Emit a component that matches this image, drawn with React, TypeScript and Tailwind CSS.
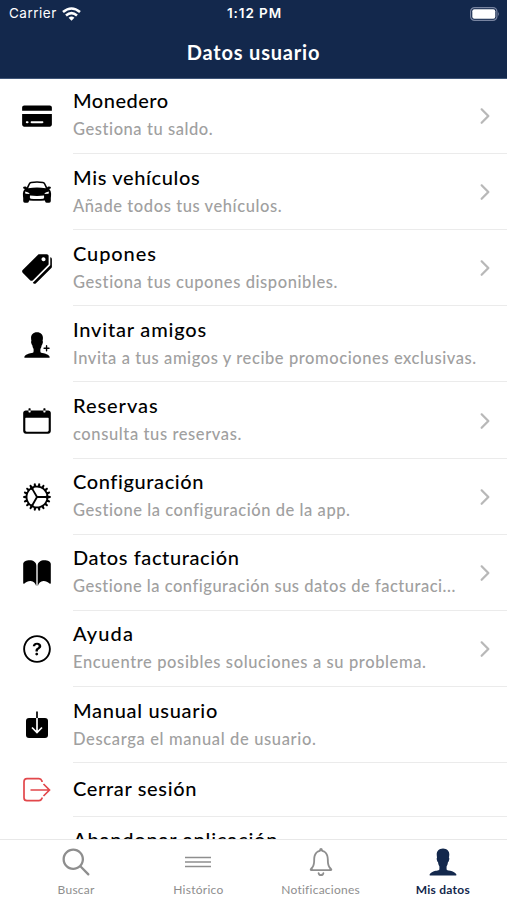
import React from 'react';
import {
  IoIosArrowForward,
  IoIosBook,
  IoIosCalendar,
  IoIosCard,
  IoIosCog,
  IoIosHelpCircleOutline,
  IoIosNotificationsOutline,
  IoIosPerson,
  IoIosPersonAdd,
  IoIosPricetags,
  IoIosSearch,
} from 'react-icons/io';

const CarIcon = () => (
  <svg className="-mt-px" width="30" height="24" viewBox="0 0 30 24">
    <path
      fillRule="evenodd"
      d="M9 1.800q6-1.200 12 0 1.600.3 2.300 1.700L25.300 7.500q.2-.9 1.500-1 2 0 2.200 1.300 0 1-1.800 1.200 1.800 1.600 1.900 4.600 0 3-.3 4.500v3q0 1.700-1.600 1.700h-2.600q-1.500 0-1.700-2.200-8 .5-15.800 0-.2 2.200-1.700 2.200H2.800q-1.600 0-1.600-1.700v-3Q.9 16.600.9 13.600 1 10.600 2.800 9 1 8.800 1 7.800q.2-1.300 2.200-1.300 1.300.1 1.500 1L6.700 3.500Q7.400 2.100 9 1.800zM9.300 3.200Q8.500 3.400 8 4.300L6.200 8.200q8.800-1.300 17.600 0L22 4.300q-.5-.9-1.300-1.100-5.700-1-11.400 0zM3.300 11.500q-.4 1.500.2 2.200l4.300.4q-.8-1.800-4.500-2.600zM26.700 11.500q.4 1.500-.2 2.200l-4.300.4q.8-1.800 4.500-2.600zM8 15.500q-.6 2.300.6 3.200 6.400.7 12.800 0 1.200-.9.6-3.200-7 .8-14 0z"
    />
  </svg>
);

const DownloadIcon = () => (
  <svg className="mt-[3px]" width="36" height="36" viewBox="0 0 36 36" fill="none">
    <path d="M10 9h16q3 0 3 3v14q0 3-3 3H10q-3 0-3-3V12q0-3 3-3z" fill="#000" />
    <path d="M18 8v15.500M13 18.500l5 5 5-5" stroke="#fff" strokeWidth="1.700" />
    <path d="M18 2.500v6.500" stroke="#000" strokeWidth="1.700" />
  </svg>
);

const LogOutIcon = () => (
  <svg width="36" height="36" viewBox="0 0 36 36" fill="none" stroke="#e2474b" strokeWidth="1.700">
    <path d="M23 10V9q-1-2.300-3-2.300H8q-3 0-3 3v16q0 3 3 3h12q2 0 3-2.300v-1" />
    <path d="M11.500 18h19.500M24.500 12l6 6-6 6" />
  </svg>
);

const MenuIcon = () => (
  <svg width="26" height="12" viewBox="0 0 26 12" stroke="#8e8e8e" strokeWidth="1.300">
    <path d="M0 1.500h26M0 6h26M0 10.500h26" />
  </svg>
);

const items = [
  { title: 'Monedero', titleSpacing: 'tracking-[0.5px]', text: 'Gestiona tu saldo.', textSpacing: 'tracking-[0.56px]', icon: <IoIosCard size={34} />, arrow: true },
  { title: 'Mis vehículos', titleSpacing: 'tracking-[0.65px]', text: 'Añade todos tus vehículos.', textSpacing: 'tracking-[0.58px]', icon: <CarIcon />, arrow: true },
  { title: 'Cupones', titleSpacing: 'tracking-[0.9px]', text: 'Gestiona tus cupones disponibles.', textSpacing: 'tracking-[0.58px]', icon: <IoIosPricetags size={34} />, arrow: true },
  { title: 'Invitar amigos', titleSpacing: 'tracking-[0.8px]', text: 'Invita a tus amigos y recibe promociones exclusivas.', textSpacing: 'tracking-[0.58px]', icon: <IoIosPersonAdd size={34} />, arrow: false },
  { title: 'Reservas', titleSpacing: 'tracking-[0.95px]', text: 'consulta tus reservas.', textSpacing: 'tracking-[0.6px]', icon: <IoIosCalendar size={34} />, arrow: true },
  { title: 'Configuración', titleSpacing: 'tracking-[0.6px]', text: 'Gestione la configuración de la app.', textSpacing: 'tracking-[0.55px]', icon: <IoIosCog size={34} />, arrow: true },
  { title: 'Datos facturación', titleSpacing: 'tracking-[0.6px]', text: 'Gestione la configuración sus datos de facturaci...', textSpacing: 'tracking-[0.5px]', icon: <IoIosBook size={34} />, arrow: true },
  { title: 'Ayuda', titleSpacing: 'tracking-[1.1px]', text: 'Encuentre posibles soluciones a su problema.', textSpacing: 'tracking-[0.61px]', icon: <IoIosHelpCircleOutline size={34} />, arrow: true },
  { title: 'Manual usuario', titleSpacing: 'tracking-[0.7px]', text: 'Descarga el manual de usuario.', textSpacing: 'tracking-[0.64px]', icon: <DownloadIcon />, arrow: false },
];

const tabs = [
  { label: 'Buscar', icon: <IoIosSearch size={36} />, active: false },
  { label: 'Histórico', icon: <MenuIcon />, active: false },
  { label: 'Notificaciones', icon: <IoIosNotificationsOutline size={36} />, active: false },
  { label: 'Mis datos', icon: <IoIosPerson size={36} />, active: true },
];

export default function App() {
  return (
    <div className="flex h-[900px] w-[507px] flex-col overflow-hidden bg-white font-['Lato',sans-serif] text-black">
      <header className="z-10 h-[79px] shrink-0 border-b border-[#3f5577] bg-[#13284c] text-white">
        <div className="grid h-[27px] grid-cols-3 items-center pl-[9px] pr-[7px] font-['Inter',sans-serif] text-[13.5px]">
          <div className="flex items-center gap-[5px] tracking-[0.5px]">
            <span>Carrier</span>
            <svg width="19" height="14" viewBox="0 0 19 14" fill="none" stroke="#fff" strokeWidth="2.6">
              <path d="M1 5q8.500-7 17 0M4 8.500q5.500-4.600 11 0" />
              <path d="M6.600 10.700q2.900-2.200 5.800 0L9.500 13.700z" fill="#fff" stroke="none" />
            </svg>
          </div>
          <span className="text-center font-semibold tracking-[0.9px]">1:12 PM</span>
          <svg className="justify-self-end" width="30" height="14" viewBox="0 0 30 14">
            <rect x=".6" y=".6" width="26.300" height="12.800" rx="4" fill="none" stroke="#7884a0" strokeWidth="1.200" />
            <rect x="2.300" y="2.300" width="23" height="9.400" rx="2" fill="#fff" />
            <path d="M28 4.800q1.800 2.200 0 4.400z" fill="#7884a0" />
          </svg>
        </div>
        <h1 className="text-center text-[20px] font-bold leading-[50px] tracking-[0.8px]">Datos usuario</h1>
      </header>

      <main className="-mt-[1.2px] min-h-0 flex-1 overflow-hidden">
        {items.map((item) => (
          <div key={item.title} className="flex h-[76.17px]">
            <div className="flex w-[73px] shrink-0 items-center justify-center pt-px">{item.icon}</div>
            <div className="flex flex-1 items-center justify-between border-b border-[#ebebeb] pr-[10px]">
              <div className="whitespace-nowrap pt-px">
                <h2 className={`text-[20px] font-medium leading-[28px] ${item.titleSpacing}`}>{item.title}</h2>
                <p className={`text-[16.5px] font-medium leading-[31px] text-[#a0a0a0] ${item.textSpacing}`}>{item.text}</p>
              </div>
              {item.arrow && <IoIosArrowForward size={24} className="mt-px text-[#b8b8b8]" />}
            </div>
          </div>
        ))}
        <div className="flex h-[54px]">
          <div className="flex w-[73px] items-center justify-center">
            <LogOutIcon />
          </div>
          <h2 className="flex flex-1 items-center border-b border-[#ebebeb] pb-[3px] text-[20px] font-medium tracking-[0.65px]">
            Cerrar sesión
          </h2>
        </div>
        <h2 className="pl-[73px] pt-[8px] text-[20px] font-medium leading-[28px] tracking-[0.8px]">Abandonar aplicación</h2>
      </main>

      <nav className="z-10 grid h-[61px] shrink-0 grid-cols-4 border-t border-[#e8e8e8] bg-white pl-[15px] pr-[3px]">
        {tabs.map((tab) => (
          <div key={tab.label} className={`flex flex-col items-center ${tab.active ? 'font-bold text-[#13284c]' : 'text-[#8e8e8e]'}`}>
            <div className="flex h-[42px] items-center pt-[2px]">{tab.icon}</div>
            <span className="text-[12px] leading-[16px] tracking-[0.25px]">{tab.label}</span>
          </div>
        ))}
      </nav>
    </div>
  );
}
